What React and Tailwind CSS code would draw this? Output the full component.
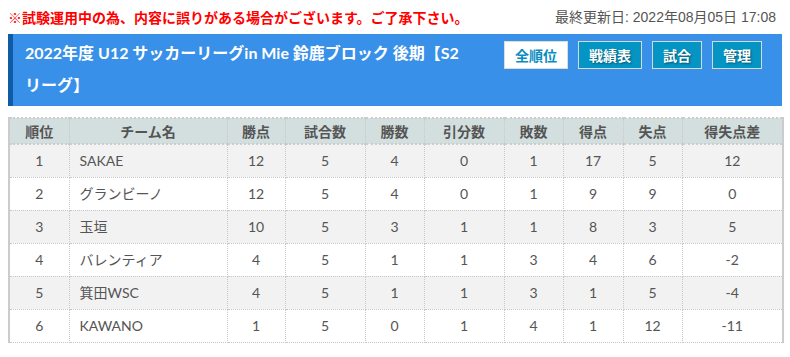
const rows = [
  { rank: 1, name: 'SAKAE', pts: 12, games: 5, w: 4, d: 0, l: 1, gf: 17, ga: 5, gd: 12 },
  { rank: 2, name: 'グランビーノ', pts: 12, games: 5, w: 4, d: 0, l: 1, gf: 9, ga: 9, gd: 0 },
  { rank: 3, name: '玉垣', pts: 10, games: 5, w: 3, d: 1, l: 1, gf: 8, ga: 3, gd: 5 },
  { rank: 4, name: 'バレンティア', pts: 4, games: 5, w: 1, d: 1, l: 3, gf: 4, ga: 6, gd: -2 },
  { rank: 5, name: '箕田WSC', pts: 4, games: 5, w: 1, d: 1, l: 3, gf: 1, ga: 5, gd: -4 },
  { rank: 6, name: 'KAWANO', pts: 1, games: 5, w: 0, d: 1, l: 4, gf: 1, ga: 12, gd: -11 },
]

const cols = [
  { label: '順位', w: 'w-[60px]' },
  { label: 'チーム名', w: 'w-[158px]' },
  { label: '勝点', w: 'w-[58px]' },
  { label: '試合数', w: 'w-[80px]' },
  { label: '勝数', w: 'w-[59px]' },
  { label: '引分数', w: 'w-[80px]' },
  { label: '敗数', w: 'w-[59px]' },
  { label: '得点', w: 'w-[60px]' },
  { label: '失点', w: 'w-[59px]' },
  { label: '得失点差', w: 'w-[101px]' },
]

function NavButton({ label, active, width }) {
  return (
    <button
      className={
        active
          ? `${width} shrink-0 whitespace-nowrap h-[28px] border border-[#dcdcdc] bg-white text-[#0a8cc0] text-[14px] font-bold font-['Noto_Sans_CJK_JP',sans-serif]`
          : `${width} shrink-0 whitespace-nowrap h-[28px] border border-[#d8d8d8] bg-[#0595c4] text-white text-[14px] font-bold font-['Noto_Sans_CJK_JP',sans-serif] [text-shadow:1px_1px_2px_rgba(0,0,0,0.45)]`
      }
    >
      {label}
    </button>
  )
}

export default function App() {
  const cell = 'border border-dotted border-[#c8c8c8] text-center'
  return (
    <div className="w-[790px] px-2 bg-white font-['Lato','Noto_Sans_CJK_JP',sans-serif] text-[#555]">
      <div className="h-[34px] flex items-center justify-between">
        <span className="text-[14px] font-bold text-[#f00] font-['Noto_Sans_CJK_JP',sans-serif]">
          ※試験運用中の為、内容に誤りがある場合がございます。ご了承下さい。
        </span>
        <span className="text-[14px] pr-[6px] text-[#555] font-['Liberation_Sans','Noto_Sans_CJK_JP',sans-serif]">
          最終更新日: 2022年08月05日 17:08
        </span>
      </div>

      <div className="flex items-start h-[72px] bg-[#3990e8] border-l-[5px] border-[#0f5ba6]">
        <h1 className="w-[460px] shrink-0 pl-3 pt-[3px] text-[16px] leading-[32px] font-bold text-white">
          2022年度 U12 サッカーリーグin Mie 鈴鹿ブロック 後期【S2リーグ】
        </h1>
        <div className="flex gap-[10px] ml-[31px] mt-[7px]">
          <NavButton label="全順位" active width="w-[64px]" />
          <NavButton label="戦績表" width="w-[64px]" />
          <NavButton label="試合" width="w-[50px]" />
          <NavButton label="管理" width="w-[50px]" />
        </div>
      </div>

      <table className="mt-[11px] w-[774px] table-fixed border-collapse border-x-2 border-[#ccc] text-[14px]">
        <thead>
          <tr className="bg-[#d3dfdf] h-[26px]">
            {cols.map((c) => (
              <th
                key={c.label}
                className={`${c.w} border-x border-dotted border-x-[#c8c8c8] border-y-2 border-y-[#ccc] font-bold text-[14px] text-[#555] font-['Noto_Sans_CJK_JP',sans-serif]`}
              >
                {c.label}
              </th>
            ))}
          </tr>
        </thead>
        <tbody>
          {rows.map((r, i) => (
            <tr key={r.rank} className={i % 2 === 0 ? 'h-[33px] bg-[#f2f2f2]' : 'h-[33px] bg-white'}>
              <td className={cell}>{r.rank}</td>
              <td className="border border-dotted border-[#c8c8c8] text-left pl-[10px]">{r.name}</td>
              <td className={cell}>{r.pts}</td>
              <td className={cell}>{r.games}</td>
              <td className={cell}>{r.w}</td>
              <td className={cell}>{r.d}</td>
              <td className={cell}>{r.l}</td>
              <td className={cell}>{r.gf}</td>
              <td className={cell}>{r.ga}</td>
              <td className={cell}>{r.gd}</td>
            </tr>
          ))}
        </tbody>
      </table>
    </div>
  )
}
